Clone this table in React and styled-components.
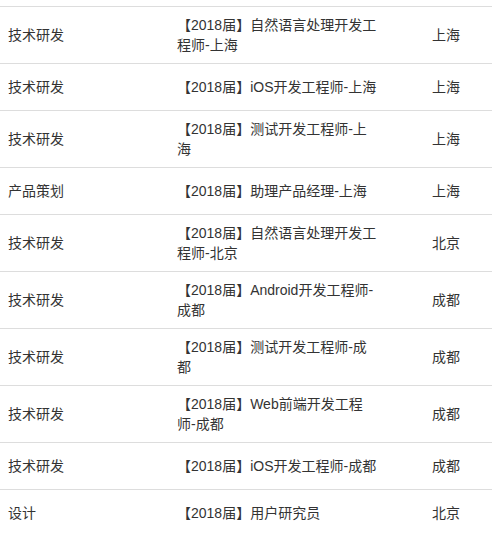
import React from 'react'
import styled, { createGlobalStyle } from 'styled-components'

const GlobalStyle = createGlobalStyle`
  html, body {
    margin: 0;
    padding: 0;
    background: #fff;
  }
  body {
    font-family: "Liberation Sans", Arial, "Noto Sans CJK SC", sans-serif;
    font-size: 14px;
    color: #333;
  }
`

const Wrapper = styled.div`
  padding-top: 6px;
`

const Table = styled.table`
  width: 100%;
  border-collapse: collapse;
  table-layout: fixed;
`

const Row = styled.tr`
  border-top: 1px solid #ddd;
  border-bottom: 1px solid #ddd;
`

const Cell = styled.td`
  height: 30px;
  padding: 8px 8px;
  line-height: 20px;
  vertical-align: middle;
  box-sizing: content-box;
`

const Line = styled.span`
  display: block;
  white-space: nowrap;
`

const jobs = [
  ['技术研发', ['【2018届】自然语言处理开发工', '程师-上海'], '上海'],
  ['技术研发', ['【2018届】iOS开发工程师-上海'], '上海'],
  ['技术研发', ['【2018届】测试开发工程师-上', '海'], '上海'],
  ['产品策划', ['【2018届】助理产品经理-上海'], '上海'],
  ['技术研发', ['【2018届】自然语言处理开发工', '程师-北京'], '北京'],
  ['技术研发', ['【2018届】Android开发工程师-', '成都'], '成都'],
  ['技术研发', ['【2018届】测试开发工程师-成', '都'], '成都'],
  ['技术研发', ['【2018届】Web前端开发工程', '师-成都'], '成都'],
  ['技术研发', ['【2018届】iOS开发工程师-成都'], '成都'],
  ['设计', ['【2018届】用户研究员'], '北京'],
]

export default function App() {
  return (
    <Wrapper>
      <GlobalStyle />
      <Table>
        <colgroup>
          <col style={{ width: 169 }} />
          <col style={{ width: 255 }} />
          <col />
        </colgroup>
        <tbody>
          {jobs.map((job, i) => (
            <Row key={i}>
              <Cell>{job[0]}</Cell>
              <Cell>
                {job[1].map((line, j) => (
                  <Line key={j}>{line}</Line>
                ))}
              </Cell>
              <Cell>{job[2]}</Cell>
            </Row>
          ))}
        </tbody>
      </Table>
    </Wrapper>
  )
}
